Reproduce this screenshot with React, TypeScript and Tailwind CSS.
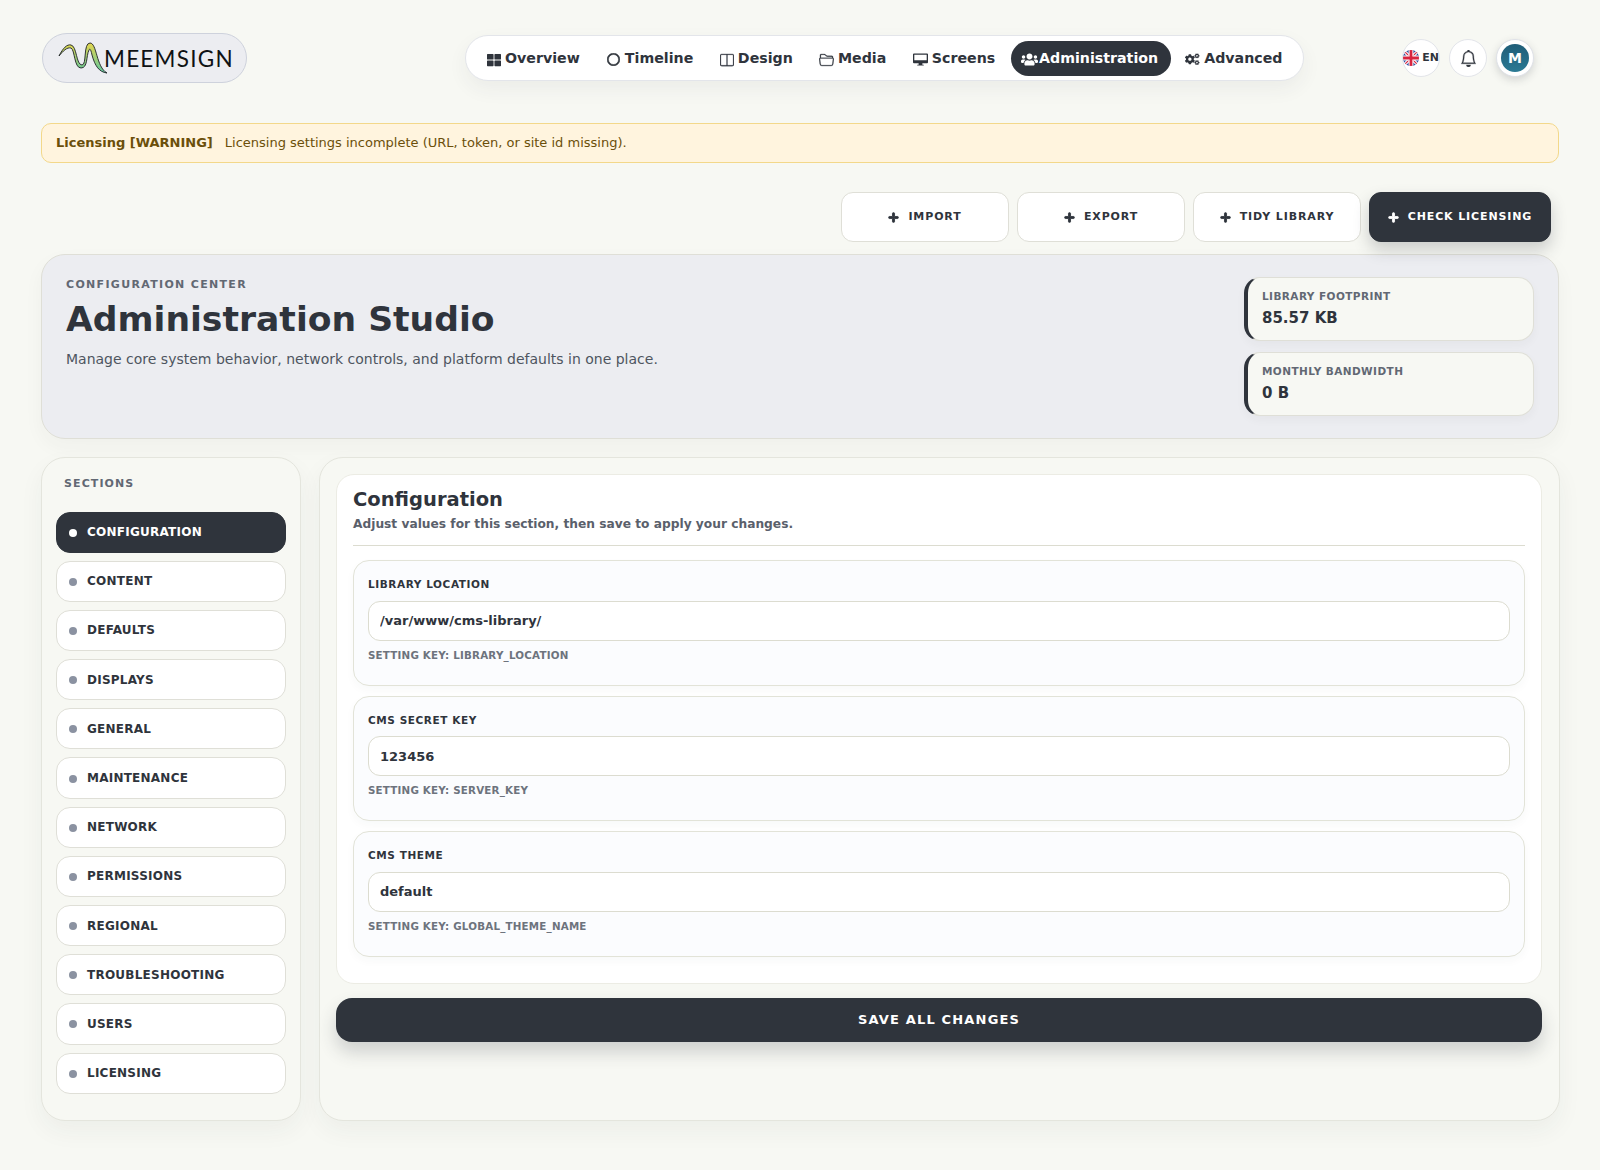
import { BsLayoutSplit, BsFolder2Open, BsBell } from 'react-icons/bs';
import { FaUsers, FaCogs, FaPlus, FaThLarge, FaRegCircle } from 'react-icons/fa';

function MonitorIcon({ size, className }: { size: number; className?: string }) {
  return (
    <svg width={size} height={size} viewBox="0 0 16 16" fill="currentColor" className={className}>
      <path fillRule="evenodd" d="M1 1.5h14a1 1 0 0 1 1 1v8.5a1 1 0 0 1-1 1H10v1.5h1.5v1h-7v-1H6V12H1a1 1 0 0 1-1-1V2.5a1 1 0 0 1 1-1Zm.4 1.4v5.8h13.2V2.9Z" />
    </svg>
  );
}

const navItems = [
  { label: 'Overview', icon: FaThLarge, size: 14 },
  { label: 'Timeline', icon: FaRegCircle, size: 13, stroke: 24, iconClass: 'ml-[0.5px] mr-[1px]' },
  { label: 'Design', icon: BsLayoutSplit, size: 14, stroke: 0.3 },
  { label: 'Media', icon: BsFolder2Open, size: 15, stroke: 0.25, iconClass: 'mr-[-0.5px]' },
  { label: 'Screens', icon: MonitorIcon, size: 15 },
  { label: 'Administration', icon: FaUsers, size: 17, active: true },
  { label: 'Advanced', icon: FaCogs, size: 14.5 },
];

const sections = ['Configuration', 'Content', 'Defaults', 'Displays', 'General', 'Maintenance', 'Network', 'Permissions', 'Regional', 'Troubleshooting', 'Users', 'Licensing'];

const fields = [
  { label: 'Library Location', value: '/var/www/cms-library/', settingKey: 'LIBRARY_LOCATION' },
  { label: 'CMS Secret Key', value: '123456', settingKey: 'SERVER_KEY' },
  { label: 'CMS Theme', value: 'default', settingKey: 'GLOBAL_THEME_NAME' },
];

function Logo() {
  return (
    <div className="ml-[1px] flex h-[50px] w-[205px] items-center rounded-full border border-[#ced2dc] bg-[#ecedf1] pl-[15px]">
      <svg width="50" height="34" viewBox="0 0 50 34" className="shrink-0">
        <defs>
          <linearGradient id="wave" x1="0" y1="0" x2="0" y2="1">
            <stop offset="0" stopColor="#e4d64e" />
            <stop offset="1" stopColor="#5fc8a0" />
          </linearGradient>
        </defs>
        <path d="M1 15C5 7 9 3 13 4C19 5 18 24 24 24C29 24 25 2 32 2C39 2 38 26 49 32C41 31 37 25 34 14C33 9 32 7 31 9C28 15 30 27 23 27C16 27 17 9 13 7C9 6 5 10 1 15Z" fill="url(#wave)" stroke="#1d2125" strokeWidth="0.9" strokeLinejoin="round" />
      </svg>
      <span className="ml-[-4px] mt-[3px] font-['Lato',sans-serif] text-[22.5px] leading-none tracking-[0.055em] text-[#0f1214]">MEEMSIGN</span>
    </div>
  );
}

function UkFlag() {
  return (
    <svg width="16" height="16" viewBox="0 0 20 20" className="shrink-0 rounded-full">
      <rect width="20" height="20" fill="#2b4a9b" />
      <path d="M0 0L20 20M20 0L0 20" stroke="#fff" strokeWidth="4" />
      <path d="M0 0L20 20M20 0L0 20" stroke="#d8243f" strokeWidth="1.5" />
      <path d="M10 0V20M0 10H20" stroke="#fff" strokeWidth="6" />
      <path d="M10 0V20M0 10H20" stroke="#d8243f" strokeWidth="3.5" />
    </svg>
  );
}

function Header() {
  return (
    <header className="flex h-[50px] items-center">
      <Logo />
      <nav className="ml-[218px] flex h-[46px] w-[839px] items-center gap-[4.3px] rounded-full border border-[#e3e5ea] bg-white pl-[10.7px] shadow-[0_8px_20px_rgba(47,52,60,0.06)]">
        {navItems.map((item) => (
          <a key={item.label} className={`flex h-[35px] items-center rounded-[18px] pl-[10px] pt-[1px] text-[14.2px] font-bold ${item.active ? 'ml-[-1px] gap-[1.5px] bg-[#2f343c] pr-[13px] text-white' : 'gap-[4.3px] pr-[12px] text-[#2f343c]'}`}>
            <item.icon size={item.size} strokeWidth={item.stroke} className={`mt-[2px] shrink-0 ${item.iconClass ?? ''}`} />
            <span>{item.label}</span>
          </a>
        ))}
      </nav>
      <div className="ml-auto mr-[25px] flex items-center gap-[9px]">
        <div className="flex h-[38px] w-[38px] items-center justify-center gap-[3px] rounded-full border border-[#e3e5ea] bg-white">
          <UkFlag />
          <span className="text-[11px] font-bold text-[#2f343c]">EN</span>
        </div>
        <div className="flex h-[38px] w-[38px] items-center justify-center rounded-full border border-[#e3e5ea] bg-white text-[#2f343c]">
          <BsBell size={17} strokeWidth={0.3} />
        </div>
        <div className="flex h-[38px] w-[38px] items-center justify-center rounded-full border border-[#dfe2e8] bg-white shadow-[0_3px_8px_rgba(47,52,60,0.18)]">
          <div className="flex h-[28px] w-[28px] items-center justify-center rounded-full bg-gradient-to-b from-[#1f5d78] to-[#2b7a94] text-[14px] font-bold text-white">M</div>
        </div>
      </div>
    </header>
  );
}

function ActionButton({ label, primary }: { label: string; primary?: boolean }) {
  return (
    <button className={`flex h-[50px] items-center justify-center gap-[9px] rounded-[12px] border text-[11px] font-bold uppercase tracking-[0.08em] ${primary ? 'w-[182px] border-[#2f343c] bg-[#2f343c] text-white shadow-[0_8px_16px_rgba(47,52,60,0.22)]' : 'w-[168px] border-[#dfdfd7] bg-white text-[#2f343c]'}`}>
      <FaPlus size={11} strokeWidth={40} />
      {label}
    </button>
  );
}

function StatCard({ label, value }: { label: string; value: string }) {
  return (
    <div className="flex h-[64px] flex-col justify-center rounded-[16px] border border-[#dfdfd7] border-l-4 border-l-[#2f343c] bg-[#f7f8f3] pl-[14px] shadow-[0_4px_10px_rgba(47,52,60,0.04)]">
      <div className="pt-[1px] text-[10.5px] font-bold uppercase tracking-[0.04em] text-[#626873]">{label}</div>
      <div className="mt-[2px] text-[15px] font-bold text-[#2f343c]">{value}</div>
    </div>
  );
}

function Hero() {
  return (
    <section className="mt-[12px] flex h-[185px] justify-between rounded-[24px] border border-[#dfdfd7] bg-[#ecedf1] pl-[24px] pr-[24px] pt-[22px] shadow-[0_8px_20px_rgba(47,52,60,0.04)]">
      <div>
        <div className="text-[11px] font-bold uppercase leading-[16px] tracking-[0.12em] text-[#626873]">Configuration Center</div>
        <h1 className="mt-[4px] text-[34.6px] font-bold leading-[44px] text-[#2f343c]">Administration Studio</h1>
        <p className="mt-[7px] text-[14px] leading-[22px] text-[#4e5560]">Manage core system behavior, network controls, and platform defaults in one place.</p>
      </div>
      <div className="flex w-[290px] flex-col gap-[11px]">
        <StatCard label="Library Footprint" value="85.57 KB" />
        <StatCard label="Monthly Bandwidth" value="0 B" />
      </div>
    </section>
  );
}

function Sidebar() {
  return (
    <aside className="flex h-[664px] w-[260px] shrink-0 flex-col rounded-[24px] border border-[#e4e5dd] bg-[#f7f8f3] px-[14px] pt-[18px] shadow-[0_10px_24px_rgba(47,52,60,0.05)]">
      <div className="pl-[8px] text-[11px] font-bold uppercase leading-[16px] tracking-[0.1em] text-[#626873]">Sections</div>
      <div className="mt-[19.5px] flex flex-col gap-[8px]">
        {sections.map((name, i) => (
          <button key={name} className={`flex h-[41.2px] items-center gap-[10px] rounded-[14px] border pl-[12px] text-[12px] font-bold uppercase tracking-[0.02em] ${i === 0 ? 'border-[#2f343c] bg-[#2f343c] text-white' : 'border-[#dfdfd7] bg-white text-[#2f343c]'}`}>
            <span className={`mt-[1px] h-2 w-2 rounded-full ${i === 0 ? 'bg-white' : 'bg-[#8b92a1]'}`}></span>
            {name}
          </button>
        ))}
      </div>
    </aside>
  );
}

function Field({ label, value, settingKey }: { label: string; value: string; settingKey: string }) {
  return (
    <div className="h-[125.5px] rounded-[16px] border border-[#e2e3d8] bg-[#fbfcfe] px-[14px] pt-[15px] shadow-[0_4px_10px_rgba(47,52,60,0.03)]">
      <div className="text-[10.5px] font-bold uppercase leading-[16px] tracking-[0.055em] text-[#2f343c]">{label}</div>
      <input readOnly value={value} className="mt-[8.8px] block h-[40px] w-full rounded-[12px] border border-[#dcdcd0] bg-white px-[11px] pb-[0.6px] text-[13px] font-bold text-[#2f343c] outline-none" />
      <div className="mt-[6px] text-[10.3px] font-bold uppercase leading-[16px] tracking-[0.02em] text-[#6d737d]">Setting Key: {settingKey}</div>
    </div>
  );
}

function ConfigPanel() {
  return (
    <main className="h-[664px] flex-1 rounded-[24px] border border-[#e4e5dd] bg-[#f7f8f3] pl-[16px] pr-[17px] pt-[16px] shadow-[0_10px_24px_rgba(47,52,60,0.05)]">
      <div className="h-[510px] rounded-[18px] border border-[#ecece4] bg-white px-[16px] pt-[13px]">
        <h2 className="text-[19.5px] font-bold leading-[24px] text-[#2f343c]">Configuration</h2>
        <p className="text-[12.23px] font-bold leading-[24px] text-[#5a606b]">Adjust values for this section, then save to apply your changes.</p>
        <div className="mt-[9px] border-t border-[#dcdcd0]"></div>
        <div className="mt-[14px] flex flex-col gap-[10.2px]">
          {fields.map((f) => <Field key={f.settingKey} {...f} />)}
        </div>
      </div>
      <button className="mt-[14px] block h-[44px] w-[1206px] rounded-[16px] bg-[#2f343c] text-[13px] font-bold uppercase tracking-[0.09em] text-white shadow-[0_10px_18px_rgba(47,52,60,0.2)]">Save All Changes</button>
    </main>
  );
}

export default function App() {
  return (
    <div className="min-h-[1170px] bg-[#f7f8f3] px-[41px] pt-[33px] font-['DejaVu_Sans',sans-serif]">
      <Header />
      <div className="mt-[40px] flex h-[40px] items-center rounded-[10px] border border-[#f3d88a] bg-[#fff4de] px-[14px] text-[13px] text-[#6b4f0a]">
        <strong className="font-bold">Licensing [WARNING]</strong>
        <span className="ml-[12px]">Licensing settings incomplete (URL, token, or site id missing).</span>
      </div>
      <div className="mt-[29px] flex justify-end gap-[8px] pr-[8px]">
        <ActionButton label="Import" />
        <ActionButton label="Export" />
        <ActionButton label="Tidy Library" />
        <ActionButton label="Check Licensing" primary />
      </div>
      <Hero />
      <div className="mt-[18px] flex gap-[18px]">
        <Sidebar />
        <ConfigPanel />
      </div>
    </div>
  );
}
